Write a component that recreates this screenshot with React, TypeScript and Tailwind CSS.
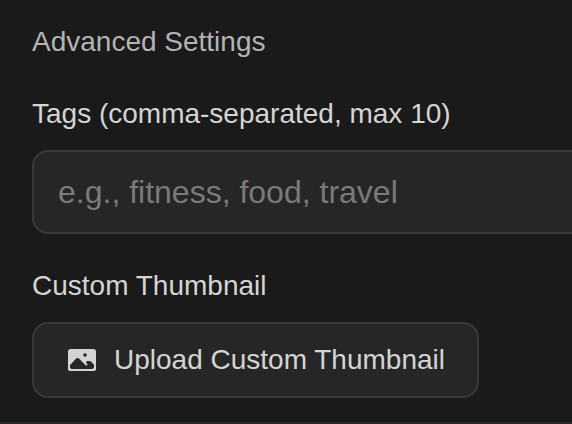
import React, { useState } from "react";

const ImageIcon = () => (
  <svg className="h-8 w-8" viewBox="0 0 32 32" aria-hidden="true">
    <rect x="2" y="5" width="28" height="22" rx="2.6" fill="currentColor" />
    <circle cx="19" cy="11" r="1.8" fill="#262626" />
    <path
      fill="#262626"
      d="M4 21.2L9.6 15C10.6 13.8 12.2 13.8 13.2 14.8L18.6 20.2C19.2 21.4 21.4 22.2 21.6 20.6C21.6 19.8 20.4 19.4 20.2 18.4C20.2 17.2 21.2 16.8 22.2 17.2C23.4 16.6 24.4 17 25.2 17.8L28 20.8V23C28 24.2 27.2 25 26 25H6C4.8 25 4 24.2 4 23Z"
    />
  </svg>
);

const AdvancedSettings = () => {
  const [tags, setTags] = useState("");

  return (
    <section className="px-8 pt-6 pb-6">
      <h2 className="text-[28px] leading-9 text-[#b3b3b3]">
        Advanced Settings
      </h2>
      <div className="mt-9 w-[720px]">
        <label
          htmlFor="tags"
          className="block text-[28px] leading-9 text-[#d4d4d4]"
        >
          Tags (comma-separated, max 10)
        </label>
        <input
          id="tags"
          type="text"
          value={tags}
          onChange={(e) => setTags(e.target.value)}
          placeholder="e.g., fitness, food, travel"
          className="mt-[18px] block w-full rounded-2xl border-2 border-[#3a3a3a] bg-[#262626] px-6 py-5 text-[32px] leading-10 text-[#d4d4d4] placeholder:text-[#7a7a7a]"
        />
      </div>
      <div className="mt-[34px]">
        <h3 className="text-[28px] leading-9 text-[#d4d4d4]">
          Custom Thumbnail
        </h3>
        <button
          type="button"
          className="mt-[18px] flex items-center gap-4 rounded-2xl border-2 border-[#3a3a3a] bg-[#262626] px-8 py-[18px] text-[28px] leading-9 text-[#d4d4d4]"
        >
          <ImageIcon />
          Upload Custom Thumbnail
        </button>
      </div>
    </section>
  );
};

const App = () => {
  return (
    <main className="min-h-screen overflow-hidden bg-[#1a1a1a] font-['Liberation_Sans',Arial,sans-serif]">
      <AdvancedSettings />
      <hr className="border-t-2 border-[#2a2426]" />
    </main>
  );
};

export default App;
